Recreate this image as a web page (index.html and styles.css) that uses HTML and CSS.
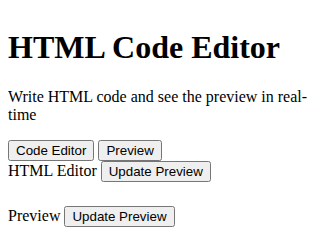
FILE: index.html
```html
<!DOCTYPE html>
<html lang="en">
<head>
  <meta charset="UTF-8">
  <meta name="viewport" content="width=device-width, initial-scale=1.0">
  <title>HTML Code Editor</title>
  <link rel="stylesheet" href="styles.css">
</head>
<body>

  <h1>HTML Code Editor</h1>
  <p>Write HTML code and see the preview in real-time</p>

  <!-- Tabs -->
  <div class="tabs">
    <button class="tab">Code Editor</button>
    <button class="tab">Preview</button>
  </div>

  <!-- Editor -->
  <div class="panel">
    <span>HTML Editor</span>
    <button>Update Preview</button>
  </div>

  <!-- Preview -->
  <div class="panel preview">
    <span>Preview</span>
    <button>Update Preview</button>
  </div>

</body>
</html>
```
FILE: styles.css
```css
body {
  font-family: "Liberation Serif", serif;
  margin: 8px;
}

button {
  font-family: "Liberation Sans", Arial, sans-serif;
  font-size: 13.33px;
}

.preview {
  margin-top: 24px;
}
```
